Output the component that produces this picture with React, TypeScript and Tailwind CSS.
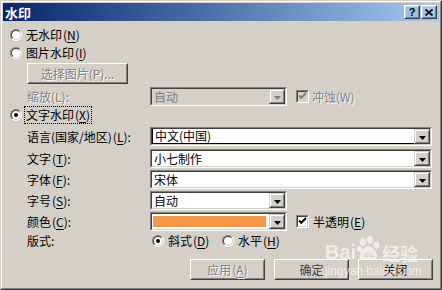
import React from "react";

type Kids = { className?: string; children?: React.ReactNode };

// Win2000 style bevels
function Sunken({ className = "", children }: Kids) {
  return (
    <div className={`border border-t-[#808080] border-l-[#808080] border-b-white border-r-white ${className}`}>
      <div className="flex h-full w-full border border-t-[#404040] border-l-[#404040] border-b-[#d4d0c8] border-r-[#d4d0c8]">
        {children}
      </div>
    </div>
  );
}

function Raised({ className = "", children }: Kids) {
  return (
    <div className={`border border-t-white border-l-white border-b-[#404040] border-r-[#404040] ${className}`}>
      <div className="flex h-full w-full items-center justify-center border border-t-[#d4d0c8] border-l-[#d4d0c8] border-b-[#808080] border-r-[#808080]">
        {children}
      </div>
    </div>
  );
}

function Mn({ k }: { k: string }) {
  return (
    <span className="ml-[1px]">
      (<span className="underline underline-offset-[2px]">{k}</span>)
    </span>
  );
}

const grayText = "text-[#808080] [text-shadow:1px_1px_0_#ffffff]";

function ArrowBtn({ disabled }: { disabled?: boolean }) {
  return (
    <div className="h-full w-[16px] border border-t-[#d4d0c8] border-l-[#d4d0c8] border-b-[#404040] border-r-[#404040]">
      <div className="flex h-full w-full items-center justify-center border border-t-white border-l-white border-b-[#808080] border-r-[#808080] bg-[#d4d0c8]">
        <svg width="7" height="4" viewBox="0 0 7 4" className="mt-[2px]">
          <path d="M0 0 H7 L3.5 4 Z" fill={disabled ? "#808080" : "#000000"} />
        </svg>
      </div>
    </div>
  );
}

function Combo({
  width,
  value,
  disabled,
  color,
  focused,
}: {
  width: string;
  value?: string;
  disabled?: boolean;
  color?: string;
  focused?: boolean;
}) {
  return (
    <Sunken className={`${width} h-[19px]`}>
      <div
        className={`flex min-w-0 flex-1 items-center ${disabled ? "bg-[#d4d0c8] text-[#808080]" : "bg-white"} ${
          focused ? "border-l border-b border-black" : ""
        }`}
      >
        {color ? (
          <div className="ml-[1px] mr-[3px] h-[11px] flex-1" style={{ background: color }} />
        ) : (
          <span className="pl-[2px] leading-none">{value}</span>
        )}
      </div>
      <ArrowBtn disabled={disabled} />
    </Sunken>
  );
}

function Radio({ checked }: { checked?: boolean }) {
  return (
    <div className="h-[12px] w-[12px] shrink-0 rounded-full border border-t-[#808080] border-l-[#808080] border-b-white border-r-white">
      <div className="flex h-full w-full items-center justify-center rounded-full border border-t-[#404040] border-l-[#404040] border-b-[#d4d0c8] border-r-[#d4d0c8] bg-white">
        {checked && <div className="h-[4px] w-[4px] rounded-full bg-black" />}
      </div>
    </div>
  );
}

function Check({ disabled }: { disabled?: boolean }) {
  return (
    <Sunken className="h-[13px] w-[13px] shrink-0">
      <div className={`flex flex-1 items-center justify-center ${disabled ? "bg-[#d4d0c8]" : "bg-white"}`}>
        <svg width="9" height="9" viewBox="0 0 9 9">
          <path d="M1 3.5 L3.2 5.8 L8 1" stroke={disabled ? "#808080" : "#000000"} strokeWidth="2" fill="none" />
        </svg>
      </div>
    </Sunken>
  );
}

function PushButton({ children, disabled }: { children: React.ReactNode; disabled?: boolean }) {
  return (
    <Raised className="h-[21px] w-[75px]">
      <span className={disabled ? grayText : "text-black"}>{children}</span>
    </Raised>
  );
}

function FieldRow({ label, children, mt }: { label: React.ReactNode; children: React.ReactNode; mt: string }) {
  return (
    <div className={`flex h-[19px] items-center ${mt}`}>
      <div className="w-[123px] pl-[17px] box-content">{label}</div>
      {children}
    </div>
  );
}

function Paw() {
  return (
    <svg width="26" height="26" viewBox="0 0 26 26" fill="#ffffff">
      <ellipse cx="7" cy="6" rx="3" ry="4" />
      <ellipse cx="14" cy="4" rx="3" ry="4" />
      <ellipse cx="20.5" cy="9" rx="3" ry="3.5" />
      <ellipse cx="3.5" cy="13" rx="2.5" ry="3" />
      <path d="M12 10 C16 10 22 17 21 21 C20 25 15 23 12 23 C9 23 4 25 3.5 21 C3 17 8 10 12 10 Z" />
      <text x="8" y="21" fontSize="8" fontWeight="bold" fill="#d4d0c8" fontFamily="Liberation Sans, sans-serif">
        du
      </text>
    </svg>
  );
}

export default function App() {
  return (
    <div className="relative h-[290px] w-[442px] overflow-hidden border border-t-[#d4d0c8] border-l-[#d4d0c8] border-b-[#404040] border-r-[#404040] bg-[#d4d0c8] font-['Noto_Sans_CJK_SC','Noto_Sans',sans-serif] text-[12px] leading-none text-black">
      <div className="flex h-full w-full flex-col border border-t-white border-l-white border-b-[#808080] border-r-[#808080] p-[1px]">
        {/* Title bar */}
        <div className="flex h-[18px] items-center bg-gradient-to-r from-[#0a246a] to-[#a6caf0] pl-[2px] pr-[2px]">
          <span className="flex-1 text-[13px] font-bold text-white">水印</span>
          <Raised className="h-[14px] w-[16px]">
            <span className="font-['Liberation_Sans'] text-[11px] font-bold leading-none">?</span>
          </Raised>
          <Raised className="ml-[1px] h-[14px] w-[16px]">
            <svg width="8" height="7" viewBox="0 0 8 7">
              <path d="M0.5 0.5 L7.5 6.5 M7.5 0.5 L0.5 6.5" stroke="#000" strokeWidth="1.6" />
            </svg>
          </Raised>
        </div>

        {/* Body */}
        <div className="flex flex-1 flex-col pl-[7px] pr-[6px]">
          <div className="mt-[5px] flex h-[18px] items-center gap-[4px]">
            <Radio />
            <span>
              无水印<Mn k="N" />
            </span>
          </div>
          <div className="flex h-[18px] items-center gap-[4px]">
            <Radio />
            <span>
              图片水印<Mn k="I" />
            </span>
          </div>
          <div className="mt-[1px] pl-[17px]">
            <Raised className="h-[21px] w-[101px]">
              <span className={grayText}>选择图片(P)...</span>
            </Raised>
          </div>
          <div className="mt-[3px] flex h-[19px] items-center">
            <div className={`w-[123px] pl-[17px] box-content ${grayText}`}>缩放(L):</div>
            <Combo width="w-[137px]" value="自动" disabled />
            <div className="ml-[9px] flex items-center gap-[3px]">
              <Check disabled />
              <span className={grayText}>冲蚀(W)</span>
            </div>
          </div>
          <div className="flex h-[18px] items-center gap-[2px]">
            <Radio checked />
            <span className="border border-dotted border-black px-[1px] py-[2px]">
              文字水印<Mn k="X" />
            </span>
          </div>

          <FieldRow mt="mt-[3px]" label={<>语言(国家/地区)<Mn k="L" />:</>}>
            <Combo width="w-[282px]" value="中文(中国)" focused />
          </FieldRow>
          <FieldRow mt="mt-[3px]" label={<>文字<Mn k="T" />:</>}>
            <Combo width="w-[282px]" value="小七制作" />
          </FieldRow>
          <FieldRow mt="mt-[2px]" label={<>字体<Mn k="F" />:</>}>
            <Combo width="w-[282px]" value="宋体" />
          </FieldRow>
          <FieldRow mt="mt-[2px]" label={<>字号<Mn k="S" />:</>}>
            <Combo width="w-[137px]" value="自动" />
          </FieldRow>
          <FieldRow mt="mt-[2px]" label={<>颜色<Mn k="C" />:</>}>
            <Combo width="w-[137px]" color="#f79646" />
            <div className="ml-[9px] flex items-center gap-[4px]">
              <Check />
              <span>
                半透明<Mn k="E" />
              </span>
            </div>
          </FieldRow>
          <div className="mt-[1px] flex h-[18px] items-center">
            <div className="w-[125px] pl-[17px] box-content">版式:</div>
            <Radio checked />
            <span className="ml-[4px] w-[54px]">
              斜式<Mn k="D" />
            </span>
            <Radio />
            <span className="ml-[4px]">
              水平<Mn k="H" />
            </span>
          </div>

          <div className="mt-[9px] flex justify-end gap-[9px]">
            <PushButton disabled>
              应用<Mn k="A" />
            </PushButton>
            <PushButton>
              <span className="text-[#404040]">确定</span>
            </PushButton>
            <PushButton>关闭</PushButton>
          </div>
        </div>
      </div>

      {/* Baidu jingyan watermark over the dialog */}
      <div className="pointer-events-none absolute left-[324px] top-[235px] flex flex-col opacity-60">
        <div className="flex items-end text-white">
          <span className="font-['Liberation_Sans'] text-[20px] font-bold leading-none">Bai</span>
          <Paw />
          <span className="text-[18px] font-bold leading-none">经验</span>
        </div>
        <span className="mt-[3px] font-['Liberation_Sans'] text-[12px] leading-none text-white">jingyan.baidu.com</span>
      </div>
    </div>
  );
}
